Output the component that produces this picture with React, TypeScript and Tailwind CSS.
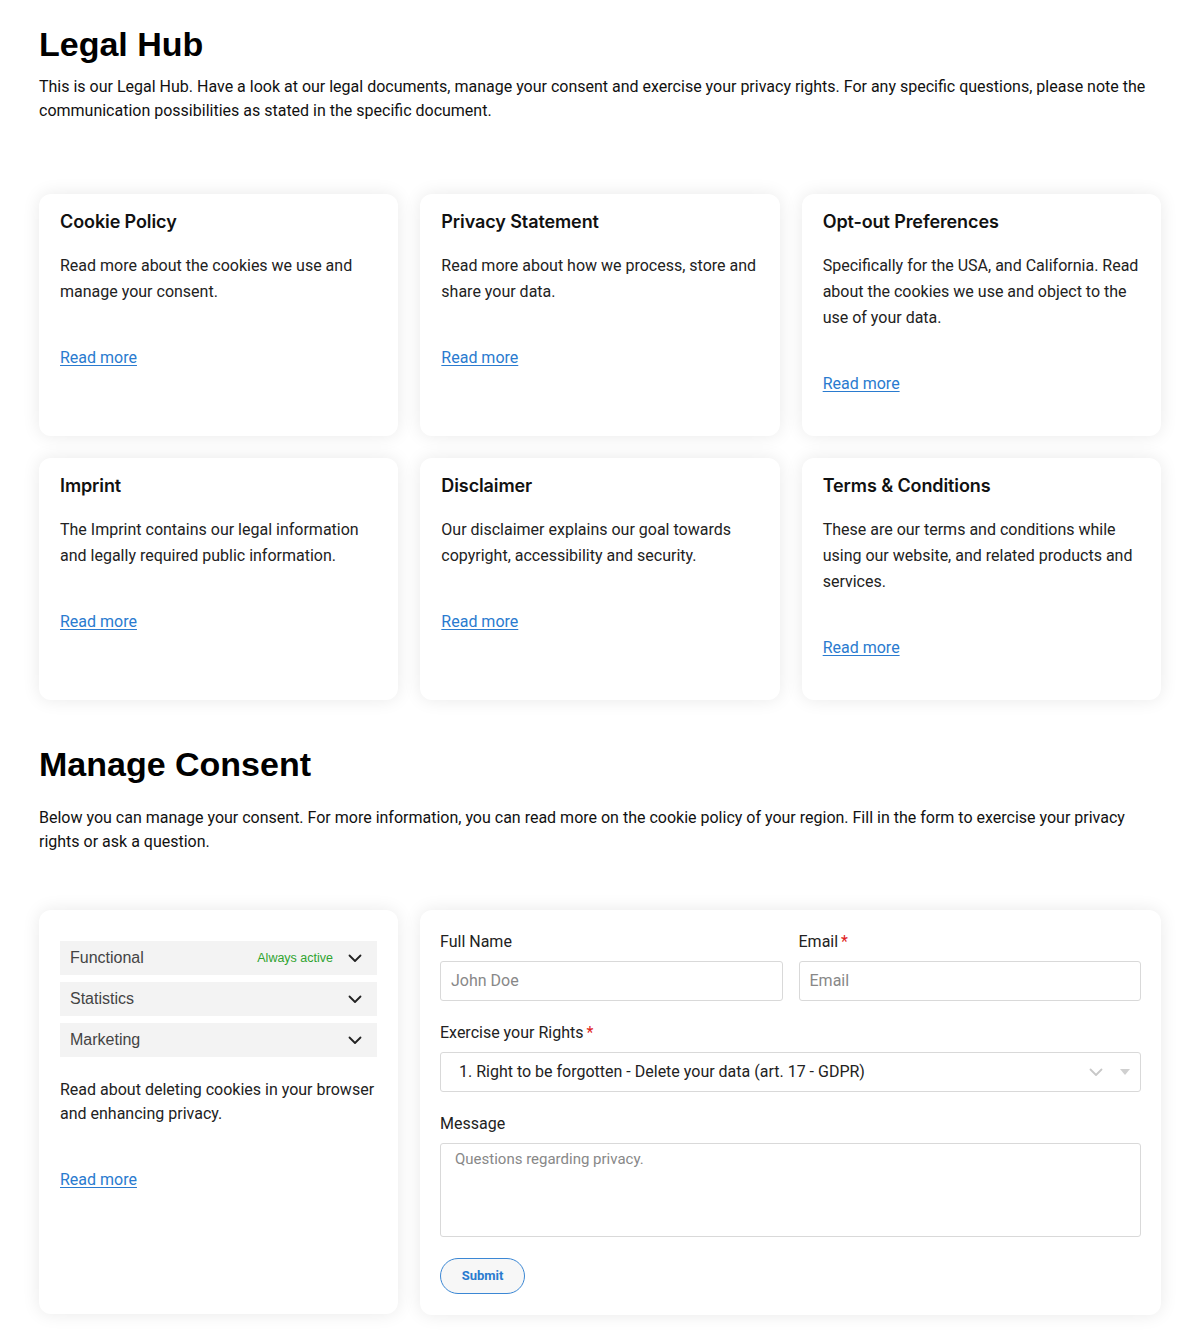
import React from "react";

type Doc = { title: string; body: string };

const docs: Doc[] = [
  { title: "Cookie Policy", body: "Read more about the cookies we use and manage your consent." },
  { title: "Privacy Statement", body: "Read more about how we process, store and share your data." },
  {
    title: "Opt-out Preferences",
    body: "Specifically for the USA, and California. Read about the cookies we use and object to the use of your data.",
  },
  { title: "Imprint", body: "The Imprint contains our legal information and legally required public information." },
  { title: "Disclaimer", body: "Our disclaimer explains our goal towards copyright, accessibility and security." },
  {
    title: "Terms & Conditions",
    body: "These are our terms and conditions while using our website, and related products and services.",
  },
];

const roboto = { fontFamily: "Roboto, 'Liberation Sans', sans-serif" };
const arial = { fontFamily: "'Liberation Sans', Arial, sans-serif" };

function Chevron({ className = "" }: { className?: string }) {
  return (
    <svg width="16" height="16" viewBox="0 0 16 16" className={className} fill="none">
      <path d="M2.5 5.5 8 11l5.5-5.5" stroke="currentColor" strokeWidth="1.8" strokeLinecap="round" strokeLinejoin="round" />
    </svg>
  );
}

function ReadMore() {
  return (
    <a href="#" className="text-[16px] leading-[26px] text-[#2a7bcf] underline underline-offset-2 decoration-1">
      Read more
    </a>
  );
}

function DocCard({ title, body }: Doc) {
  return (
    <div className="rounded-[12px] bg-white shadow-[0_0_18px_rgba(0,0,0,0.09)] px-[21px] pt-[16px] h-[242px]">
      <h3
        className="text-[18px] leading-[24px] font-semibold text-[#111] tracking-[-0.1px]"
        style={{ fontFamily: "Inter, 'Liberation Sans', sans-serif" }}
      >
        {title}
      </h3>
      <p className="mt-[19px] text-[16px] leading-[26px] text-[#222]">{body}</p>
      <div className="mt-[40px]">
        <ReadMore />
      </div>
    </div>
  );
}

function Category({ label, active }: { label: string; active?: boolean }) {
  return (
    <div className="flex items-center h-[34px] bg-[#f3f3f3] pl-[10px] pr-[14px]" style={arial}>
      <span className="text-[16px] text-[#444] flex-1">{label}</span>
      {active && <span className="text-[12.5px] text-[#2fa32f] mr-[14px]">Always active</span>}
      <Chevron className="text-[#222]" />
    </div>
  );
}

function Label({ text, required }: { text: string; required?: boolean }) {
  return (
    <div className="text-[16px] leading-[20px] text-[#222] mb-[9px]">
      {text}
      {required && <span className="text-[#e02020] ml-[3px]">*</span>}
    </div>
  );
}

export default function App() {
  return (
    <div className="bg-white min-h-[1332px] px-[39px] pt-[24px] pb-[16px] text-[#111]" style={roboto}>
      <h1 className="text-[34px] leading-[40px] font-bold text-black" style={arial}>
        Legal Hub
      </h1>
      <p className="mt-[11px] text-[16px] leading-[24px] text-[#111]">
        This is our Legal Hub. Have a look at our legal documents, manage your consent and exercise your privacy rights. For any
        specific questions, please note the communication possibilities as stated in the specific document.
      </p>

      <div className="mt-[71px] grid grid-cols-3 gap-[22px]">
        {docs.map((d) => (
          <DocCard key={d.title} {...d} />
        ))}
      </div>

      <h2 className="mt-[44px] text-[34px] leading-[40px] font-bold text-black" style={arial}>
        Manage Consent
      </h2>
      <p className="mt-[22px] text-[16px] leading-[24px] text-[#111]">
        Below you can manage your consent. For more information, you can read more on the cookie policy of your region. Fill in the
        form to exercise your privacy rights or ask a question.
      </p>

      <div className="mt-[56px] grid grid-cols-[359px_1fr] gap-[22px]">
        <div className="rounded-[12px] bg-white shadow-[0_0_18px_rgba(0,0,0,0.09)] px-[21px] pt-[31px] h-[404px]">
          <div className="flex flex-col gap-[7px]">
            <Category label="Functional" active />
            <Category label="Statistics" />
            <Category label="Marketing" />
          </div>
          <p className="mt-[21px] text-[16px] leading-[24px] text-[#222]">
            Read about deleting cookies in your browser and enhancing privacy.
          </p>
          <div className="mt-[41px]">
            <ReadMore />
          </div>
        </div>

        <div className="rounded-[12px] bg-white shadow-[0_0_18px_rgba(0,0,0,0.09)] px-[20px] pt-[22px] h-[405px]">
          <div className="grid grid-cols-2 gap-[16px]">
            <div>
              <Label text="Full Name" />
              <div className="h-[40px] border border-[#d9d9d9] rounded-[3px] flex items-center px-[10px] text-[16px] text-[#888]">
                John Doe
              </div>
            </div>
            <div>
              <Label text="Email" required />
              <div className="h-[40px] border border-[#d9d9d9] rounded-[3px] flex items-center px-[10px] text-[16px] text-[#888]">
                Email
              </div>
            </div>
          </div>

          <div className="mt-[22px]">
            <Label text="Exercise your Rights" required />
            <div className="h-[40px] border border-[#d9d9d9] rounded-[3px] flex items-center pl-[18px] pr-[10px] text-[16px] text-[#222]">
              <span className="flex-1">1. Right to be forgotten - Delete your data (art. 17 - GDPR)</span>
              <Chevron className="text-[#c8c8c8] mr-[16px]" />
              <svg width="10" height="6" viewBox="0 0 10 6">
                <path d="M0 0h10L5 6z" fill="#d0d0d0" />
              </svg>
            </div>
          </div>

          <div className="mt-[22px]">
            <Label text="Message" />
            <div className="h-[94px] border border-[#d9d9d9] rounded-[3px] px-[14px] pt-[4px] text-[15px] text-[#888]">
              Questions regarding privacy.
            </div>
          </div>

          <button className="mt-[21px] h-[36px] w-[85px] rounded-full border border-[#3b87d4] bg-[#f7f7f7] text-[13px] font-bold text-[#2a7bcf]">
            Submit
          </button>
        </div>
      </div>
    </div>
  );
}
